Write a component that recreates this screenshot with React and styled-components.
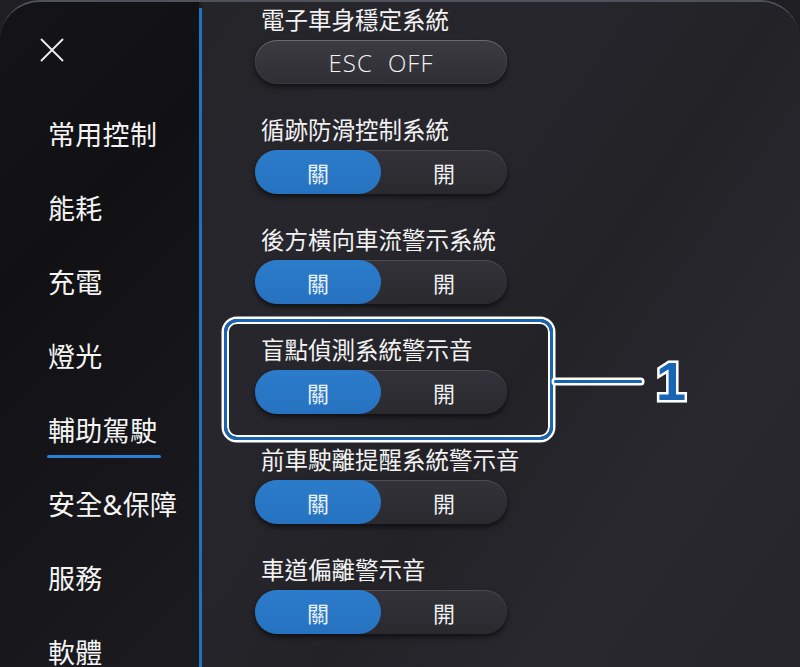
import React from 'react';
import styled, { createGlobalStyle } from 'styled-components';

const GlobalStyle = createGlobalStyle`
  html, body {
    margin: 0;
    padding: 0;
    background: #1e1e23;
  }
  #root {
    width: 800px;
    height: 667px;
    overflow: hidden;
  }
`;

const FONT = `"Noto Sans", "Noto Sans CJK TC", sans-serif`;

const Screen = styled.div`
  display: flex;
  width: 800px;
  height: 667px;
  box-sizing: border-box;
  border-top: 2px solid #4e525b;
  border-radius: 40px 40px 0 0;
  overflow: hidden;
  font-family: ${FONT};
  color: #f2f2f2;
  background: #1e1e23;
`;

const Sidebar = styled.nav`
  width: 199px;
  flex-shrink: 0;
  display: flex;
  flex-direction: column;
  background: linear-gradient(135deg, #141418 0%, #111114 35%, #17171b 70%, #1b1b20 100%);
`;

const CloseButton = styled.button`
  width: 28px;
  height: 28px;
  margin: 34px 0 0 38px;
  padding: 0;
  border: none;
  background: none;
  color: #f0f0f0;
  cursor: pointer;
`;

const NavList = styled.ul`
  list-style: none;
  margin: 34px 0 0;
  padding: 0 0 0 48px;
`;

const NavItem = styled.li`
  position: relative;
  height: 74px;
  line-height: 74px;
  font-size: 27px;
  letter-spacing: 0.3px;
  white-space: nowrap;
  color: #f4f4f4;

  ${p => p.$active && `
    &::after {
      content: '';
      position: absolute;
      left: -1px;
      bottom: 10px;
      width: 114px;
      height: 3px;
      border-radius: 2px;
      background: #2b7fd2;
    }
  `}
`;

const Divider = styled.div`
  width: 3px;
  flex-shrink: 0;
  margin-top: 6px;
  background: #1f72c4;
`;

const Main = styled.main`
  flex: 1;
  position: relative;
  padding: 4px 0 0 53px;
  background: linear-gradient(125deg, #242429 0%, #26262c 30%, #222227 55%, #28282e 75%, #25252b 100%);
`;

const Item = styled.section`
  position: relative;
  width: 252px;
  margin-bottom: 32px;

  ${p => p.$highlight && `
    &::before {
      content: '';
      position: absolute;
      left: -31px;
      top: -17px;
      right: -46px;
      bottom: -26px;
      border: 3px solid #1765b4;
      border-radius: 13px;
      box-shadow: 0 0 0 2.5px #ffffff, inset 0 0 0 2px #ffffff;
      pointer-events: none;
    }
  `}
`;

const Label = styled.div`
  height: 28px;
  line-height: 28px;
  margin: 0 0 6px 6px;
  font-size: 23.5px;
  white-space: nowrap;
  color: #f2f2f2;
`;

const Button = styled.button`
  display: block;
  width: 252px;
  height: 44px;
  border-radius: 22px;
  border: none;
  font-family: "Open Sans", "Noto Sans", sans-serif;
  font-weight: 300;
  font-size: 24px;
  letter-spacing: 1px;
  word-spacing: 8px;
  color: #f4f4f4;
  background: linear-gradient(180deg, #3b3b41 0%, #2e2e34 100%);
  box-shadow: inset 0 1px 0 rgba(255,255,255,0.2), inset 0 0 0 1px rgba(255,255,255,0.05), 0 3px 5px rgba(0,0,0,0.55);
`;

const Track = styled.div`
  display: flex;
  width: 252px;
  height: 44px;
  border-radius: 22px;
  background: linear-gradient(180deg, #323238 0%, #29292e 100%);
  box-shadow: inset 0 1px 0 rgba(255,255,255,0.13), 0 3px 5px rgba(0,0,0,0.55);
`;

const Segment = styled.div`
  flex: 0 0 126px;
  display: flex;
  align-items: center;
  justify-content: center;
  border-radius: 22px;
  font-size: 22px;
  color: ${p => (p.$on ? '#e8f1fb' : '#f0f0f0')};
  background: ${p => (p.$on ? 'linear-gradient(180deg, #2b7ccb 0%, #2672c0 100%)' : 'transparent')};
`;

const Callout = styled.div`
  position: absolute;
  left: 352px;
  top: 352px;
  display: flex;
  align-items: center;
  gap: 14px;
`;

const Leader = styled.div`
  width: 88px;
  height: 3px;
  border-radius: 2px;
  background: #1765b4;
  box-shadow: 0 0 0 2.5px #ffffff;
`;

const Number = styled.span`
  font-family: "Liberation Sans", Arial, sans-serif;
  font-weight: 700;
  font-size: 54px;
  line-height: 54px;
  color: #1765b4;
  -webkit-text-stroke: 5px #ffffff;
  paint-order: stroke fill;
`;

const navItems = ['常用控制', '能耗', '充電', '燈光', '輔助駕駛', '安全&保障', '服務', '軟體'];

const settings = [
  { label: '循跡防滑控制系統' },
  { label: '後方橫向車流警示系統' },
  { label: '盲點偵測系統警示音', highlight: true },
  { label: '前車駛離提醒系統警示音' },
  { label: '車道偏離警示音' },
  { label: '車道維持輔助系統警示音' },
];

const Toggle = ({ on }) => (
  <Track>
    <Segment $on={!on}>關</Segment>
    <Segment $on={on}>開</Segment>
  </Track>
);

export default function App() {
  return (
    <>
      <GlobalStyle />
      <Screen>
        <Sidebar>
          <CloseButton aria-label="關閉">
            <svg width="28" height="28" viewBox="0 0 28 28" fill="none" stroke="currentColor" strokeWidth="1.8">
              <path d="M3 3 L25 25 M25 3 L3 25" />
            </svg>
          </CloseButton>
          <NavList>
            {navItems.map(n => (
              <NavItem key={n} $active={n === '輔助駕駛'}>{n}</NavItem>
            ))}
          </NavList>
        </Sidebar>
        <Divider />
        <Main>
          <Item>
            <Label>電子車身穩定系統</Label>
            <Button>ESC OFF</Button>
          </Item>
          {settings.map(s => (
            <Item key={s.label} $highlight={s.highlight}>
              <Label>{s.label}</Label>
              <Toggle on={false} />
            </Item>
          ))}
          <Callout>
            <Leader />
            <Number>1</Number>
          </Callout>
        </Main>
      </Screen>
    </>
  );
}
